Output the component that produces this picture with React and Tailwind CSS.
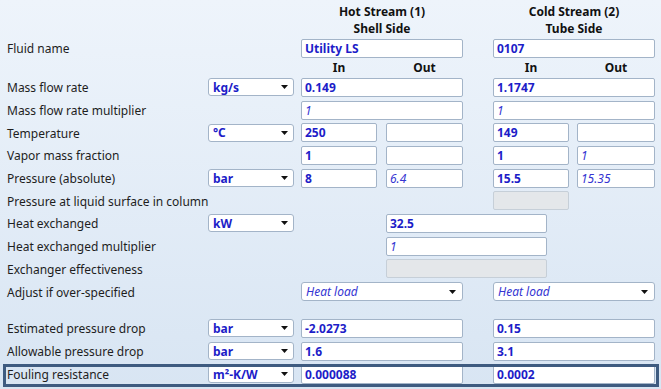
import React from 'react';

const Arrow = () => (
    <svg width="7" height="4" viewBox="0 0 7 4" className="shrink-0">
        <path d="M0 0h7L3.5 4z" fill="#111" />
    </svg>
);

// text field: bold value, italic computed value, or greyed out
const Field = ({ w, v, italic, disabled, ml }) => (
    <div
        className={`${w} ${ml || ''} h-[19px] shrink-0 rounded-[2px] border flex items-center px-[3px] pt-[1px] overflow-hidden whitespace-nowrap ${
            disabled ? 'bg-[#e4e7ea] border-[#c6cfd8]' : 'bg-white border-[#a3b4c8]'
        } ${italic ? 'italic text-[#3535d2] font-normal' : 'font-bold text-[#1d1dc8]'}`}
    >
        {v}
    </div>
);

const Unit = ({ u }) => (
    <div className="w-[86px] h-[18px] shrink-0 rounded-[3px] border border-[#a3b4c8] bg-white flex items-center justify-between pl-[4px] pr-[5px] font-bold text-[#1d1dc8]">
        <span className="pt-[1px]">{u}</span>
        <Arrow />
    </div>
);

const Select = ({ v, w }) => (
    <div className={`${w} h-[19px] shrink-0 rounded-[3px] border border-[#a3b4c8] bg-white flex items-center justify-between pl-[4px] pr-[6px] italic text-[#3535d2]`}>
        <span className="pt-[1px]">{v}</span>
        <Arrow />
    </div>
);

const Row = ({ label, unit, h = 'h-[22.7px]', children }) => (
    <div className={`${h} flex items-center`}>
        <div className="w-[208px] shrink-0 pl-[7px] pt-[2px] text-[#1e1e1e] text-[12px] whitespace-nowrap">{label}</div>
        {unit ? <Unit u={unit} /> : <div className="w-[86px] shrink-0" />}
        <div className="w-[7px] shrink-0" />
        {children}
    </div>
);

// hot: 301-463, cold: 493-655
const Full = ({ hot, cold, hotItalic, coldItalic }) => (
    <>
        <Field w="w-[162px]" v={hot} italic={hotItalic} />
        <div className="w-[30px] shrink-0" />
        <Field w="w-[162px]" v={cold} italic={coldItalic} />
    </>
);

const Split = ({ hi, ho, ci, co, hoI, coI }) => (
    <>
        <Field w="w-[76px]" v={hi} />
        <div className="w-[9px] shrink-0" />
        <Field w="w-[77px]" v={ho} italic={hoI} />
        <div className="w-[30px] shrink-0" />
        <Field w="w-[76px]" v={ci} />
        <div className="w-[8px] shrink-0" />
        <Field w="w-[78px]" v={co} italic={coI} />
    </>
);

export default function App() {
    return (
        <div className="relative w-[661px] h-[389px] overflow-hidden bg-gradient-to-b from-[#eef4fb] to-[#d8e5f3] font-['Noto_Sans',sans-serif] text-[12px] leading-none">
            {/* column headings */}
            <div className="pt-[3px] font-bold text-[#111] text-[12px]">
                <div className="h-[17px] flex items-center">
                    <div className="w-[301px] shrink-0" />
                    <div className="w-[162px] text-center">Hot Stream (1)</div>
                    <div className="w-[30px]" />
                    <div className="w-[162px] text-center">Cold Stream (2)</div>
                </div>
                <div className="h-[17px] flex items-center">
                    <div className="w-[301px] shrink-0" />
                    <div className="w-[162px] text-center">Shell Side</div>
                    <div className="w-[30px]" />
                    <div className="w-[162px] text-center">Tube Side</div>
                </div>
            </div>

            <Row label="Fluid name" h="h-[22px]">
                <Full hot="Utility LS" cold="0107" />
            </Row>

            <div className="h-[17px] flex items-center pt-[1px] font-bold text-[#111]">
                <div className="w-[301px] shrink-0" />
                <div className="w-[76px] text-center">In</div>
                <div className="w-[9px]" />
                <div className="w-[77px] text-center">Out</div>
                <div className="w-[30px]" />
                <div className="w-[76px] text-center">In</div>
                <div className="w-[8px]" />
                <div className="w-[78px] text-center">Out</div>
            </div>

            <Row label="Mass flow rate" unit="kg/s">
                <Full hot="0.149" cold="1.1747" />
            </Row>
            <Row label="Mass flow rate multiplier">
                <Full hot="1" cold="1" hotItalic coldItalic />
            </Row>
            <Row label="Temperature" unit="°C">
                <Split hi="250" ho="" ci="149" co="" />
            </Row>
            <Row label="Vapor mass fraction">
                <Split hi="1" ho="" ci="1" co="1" coI />
            </Row>
            <Row label="Pressure (absolute)" unit="bar">
                <Split hi="8" ho="6.4" ci="15.5" co="15.35" hoI coI />
            </Row>
            <Row label="Pressure at liquid surface in column">
                <div className="w-[192px] shrink-0" />
                <Field w="w-[76px]" v="" disabled />
            </Row>
            <Row label="Heat exchanged" unit="kW">
                <Field w="w-[161px]" ml="ml-[85px]" v="32.5" />
            </Row>
            <Row label="Heat exchanged multiplier">
                <Field w="w-[161px]" ml="ml-[85px]" v="1" italic />
            </Row>
            <Row label="Exchanger effectiveness">
                <Field w="w-[161px]" ml="ml-[85px]" v="" disabled />
            </Row>
            <Row label="Adjust if over-specified">
                <Select w="w-[162px]" v="Heat load" />
                <div className="w-[30px] shrink-0" />
                <Select w="w-[162px]" v="Heat load" />
            </Row>

            <div className="h-[14px]" />

            <Row label="Estimated pressure drop" unit="bar" h="h-[23px]">
                <Full hot="-2.0273" cold="0.15" />
            </Row>
            <Row label="Allowable pressure drop" unit="bar" h="h-[23px]">
                <Full hot="1.6" cold="3.1" />
            </Row>
            <Row label="Fouling resistance" unit="m²-K/W" h="h-[23px]">
                <Full hot="0.000088" cold="0.0002" />
            </Row>

            {/* focus frame over the selected row */}
            <div className="absolute left-[3px] top-[364px] w-[656px] h-[23px] border-[3px] border-[#3e5b80] pointer-events-none" />
        </div>
    );
}
